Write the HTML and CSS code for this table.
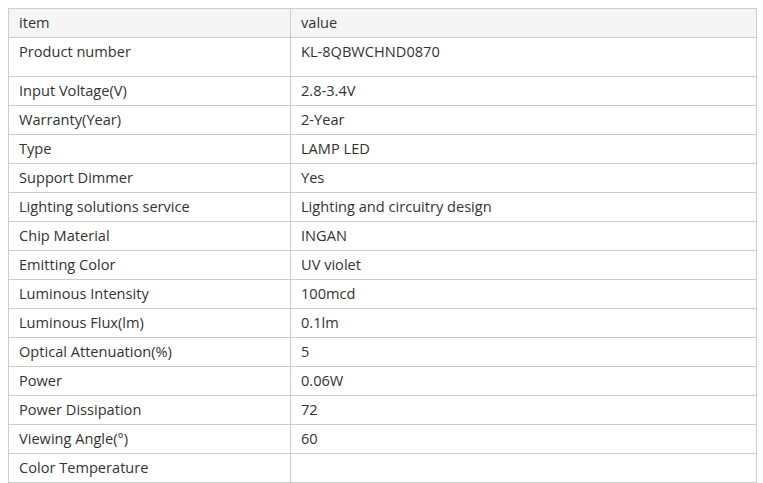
FILE: index.html
```html
<!DOCTYPE html>
<html>
<head>
<meta charset="utf-8">
<link rel="stylesheet" href="styles.css">
</head>
<body>
<table class="spec">
  <thead>
    <tr><th class="col-item">item</th><th>value</th></tr>
  </thead>
  <tbody>
    <tr class="tall"><td>Product number</td><td>KL-8QBWCHND0870</td></tr>
    <tr><td>Input Voltage(V)</td><td>2.8-3.4V</td></tr>
    <tr><td>Warranty(Year)</td><td>2-Year</td></tr>
    <tr><td>Type</td><td>LAMP LED</td></tr>
    <tr><td>Support Dimmer</td><td>Yes</td></tr>
    <tr><td>Lighting solutions service</td><td>Lighting and circuitry design</td></tr>
    <tr><td>Chip Material</td><td>INGAN</td></tr>
    <tr><td>Emitting Color</td><td>UV violet</td></tr>
    <tr><td>Luminous Intensity</td><td>100mcd</td></tr>
    <tr><td>Luminous Flux(lm)</td><td>0.1lm</td></tr>
    <tr><td>Optical Attenuation(%)</td><td>5</td></tr>
    <tr><td>Power</td><td>0.06W</td></tr>
    <tr><td>Power Dissipation</td><td>72</td></tr>
    <tr><td>Viewing Angle(°)</td><td>60</td></tr>
    <tr><td>Color Temperature</td><td></td></tr>
  </tbody>
</table>
</body>
</html>
```

FILE: styles.css
```css
html, body {
  margin: 0;
  padding: 0;
  background: #ffffff;
}
body {
  padding: 8px 0 0 8px;
  font-family: "Open Sans", "Noto Sans", sans-serif;
  font-size: 14.6px;
  color: #333333;
}
.spec {
  border-collapse: collapse;
  width: 749px;
  table-layout: fixed;
}
.spec th,
.spec td {
  border: 1px solid #cccccc;
  padding: 3px 10px 5px 10px;
  height: 20px;
  line-height: 20px;
  text-align: left;
  vertical-align: top;
  font-weight: normal;
}
.spec th {
  background: #f5f5f5;
}
.spec .col-item {
  width: 261px;
}
.spec .tall td {
  height: 30px;
}
```
